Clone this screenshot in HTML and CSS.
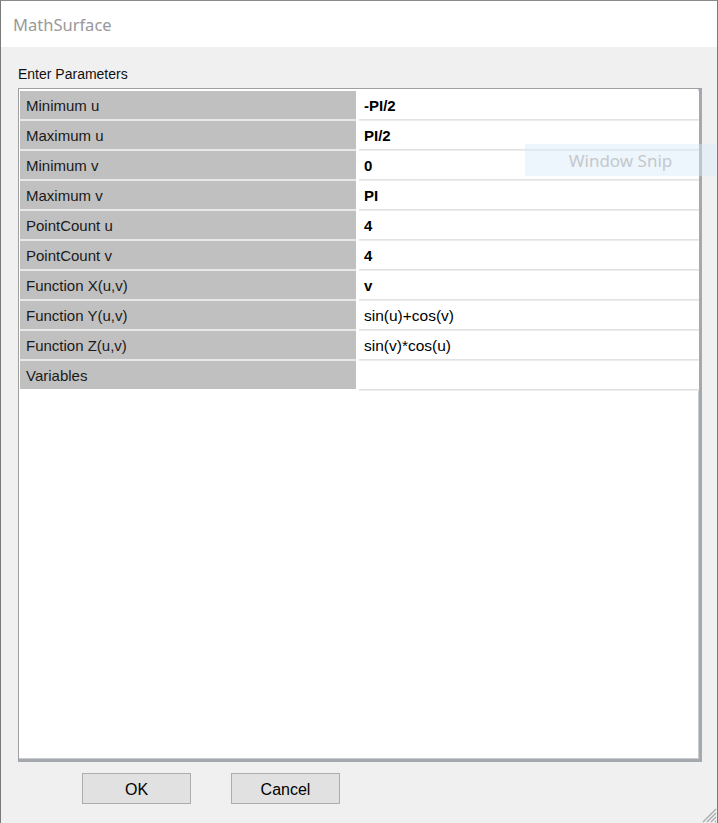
FILE: index.html
```html
<!DOCTYPE html>
<html>
<head>
<meta charset="utf-8">
<link rel="stylesheet" href="styles.css">
</head>
<body>
<div class="window">
  <div class="titlebar">MathSurface</div>
  <div class="content">
    <div class="caption">Enter Parameters</div>
    <div class="grid">
      <div class="rows">
        <div class="lbl">Minimum u</div><div class="val b">-PI/2</div>
        <div class="lbl">Maximum u</div><div class="val b">PI/2</div>
        <div class="lbl">Minimum v</div><div class="val b">0</div>
        <div class="lbl">Maximum v</div><div class="val b">PI</div>
        <div class="lbl">PointCount u</div><div class="val b">4</div>
        <div class="lbl">PointCount v</div><div class="val b">4</div>
        <div class="lbl">Function X(u,v)</div><div class="val b">v</div>
        <div class="lbl">Function Y(u,v)</div><div class="val">sin(u)+cos(v)</div>
        <div class="lbl">Function Z(u,v)</div><div class="val">sin(v)*cos(u)</div>
        <div class="lbl">Variables</div><div class="val"></div>
      </div>
    </div>
    <div class="buttons">
      <div class="btn">OK</div>
      <div class="btn">Cancel</div>
    </div>
    <svg class="grip" width="18" height="18" viewBox="0 0 18 18">
      <path d="M17 4 L4 17 M17 8 L8 17 M17 12 L12 17 M17 16 L16 17" stroke="#a8a8a8" stroke-width="1.2" fill="none"/>
    </svg>
  </div>
  <div class="snip">Window Snip</div>
</div>
</body>
</html>
```
FILE: styles.css
```css
html, body {
  margin: 0;
  padding: 0;
  background: #f0f0f0;
}
.window {
  position: relative;
  width: 718px;
  height: 823px;
  box-sizing: border-box;
  border-top: 1px solid #8a8a8a;
  border-left: 1px solid #7a7a7a;
  border-right: 1px solid #7a7a7a;
  display: flex;
  flex-direction: column;
  overflow: hidden;
}
.titlebar {
  height: 46px;
  background: #ffffff;
  box-sizing: border-box;
  padding: 12px 0 0 12px;
  font-family: "Noto Sans", "Open Sans", sans-serif;
  font-size: 16.5px;
  color: #999999;
}
.content {
  position: relative;
  flex: 1;
  background: #f0f0f0;
  display: flex;
  flex-direction: column;
  padding: 0 0 0 17px;
}
.caption {
  font-family: "Liberation Sans", Arial, sans-serif;
  font-size: 14px;
  color: #111;
  height: 41px;
  box-sizing: border-box;
  padding-top: 19px;
}
.grid {
  width: 684px;
  height: 674px;
  box-sizing: border-box;
  background: #ffffff;
  border-top: 1px solid #a0a0a0;
  border-left: 1px solid #a0a0a0;
  border-right: 3px solid #a5a8ad;
  border-bottom: 3px solid #a5a8ad;
  box-shadow: inset -1px -1px 0 #c8cbd0;
  padding: 2px 0 0 1px;
}
.rows {
  display: grid;
  grid-template-columns: 336px 340px;
  grid-auto-rows: 28px;
  column-gap: 3px;
  row-gap: 2px;
  background: linear-gradient(to right, #e8e8e8 336px, #ffffff 336px);
  width: 679px;
}
.lbl {
  background: #c0c0c0;
  font-family: "Liberation Sans", Arial, sans-serif;
  font-size: 15px;
  color: #1a1a1a;
  padding-left: 6px;
  padding-top: 1px;
  box-sizing: border-box;
  line-height: 28px;
}
.val {
  background: #ffffff;
  font-family: "Liberation Sans", Arial, sans-serif;
  font-size: 15.5px;
  color: #000;
  padding-left: 5px;
  padding-top: 1px;
  box-sizing: border-box;
  line-height: 28px;
  box-shadow: 0 1px 0 #e2e2e2, 0 2px 0 #ececec;
}
.val.b {
  font-weight: bold;
  font-size: 15px;
}
.buttons {
  display: flex;
  gap: 40px;
  padding: 11px 0 0 64px;
}
.btn {
  width: 109px;
  height: 31px;
  box-sizing: border-box;
  background: #e1e1e1;
  border: 1px solid #adadad;
  font-family: "Liberation Sans", Arial, sans-serif;
  font-size: 16px;
  color: #000;
  display: flex;
  align-items: center;
  justify-content: center;
  padding-top: 2px;
}
.grip {
  position: absolute;
  right: 0;
  bottom: 0;
}
.snip {
  position: absolute;
  left: 524px;
  top: 143px;
  width: 191px;
  height: 32px;
  background: rgba(214, 232, 250, 0.45);
  color: #c4c8cc;
  font-family: "Noto Sans", "Open Sans", sans-serif;
  font-size: 17px;
  display: flex;
  align-items: center;
  justify-content: center;
}
```
